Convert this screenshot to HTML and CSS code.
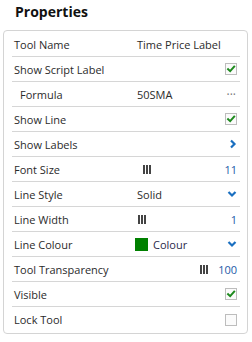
FILE: index.html
```html
<!DOCTYPE html>
<html lang="en">
<head>
  <meta charset="UTF-8" />
  <meta name="viewport" content="width=device-width, initial-scale=1.0" />
  <title>Properties</title>
  <link rel="stylesheet" href="styles.css">
</head>
<body>

  <h1 class="title">Properties</h1>

  <div class="panel">
    <div class="row">
      <span class="label">Tool Name</span>
      <span class="value">Time Price Label</span>
    </div>
    <div class="row">
      <span class="label">Show Script Label</span>
      <span class="value"></span>
      <span class="check on"><svg viewBox="0 0 12 12"><path d="M2.5 6.2 L5 8.6 L9.8 3.2" /></svg></span>
    </div>
    <div class="row">
      <span class="label sub">Formula</span>
      <span class="value">50SMA</span>
      <span class="dots">···</span>
    </div>
    <div class="row">
      <span class="label">Show Line</span>
      <span class="value"></span>
      <span class="check on"><svg viewBox="0 0 12 12"><path d="M2.5 6.2 L5 8.6 L9.8 3.2" /></svg></span>
    </div>
    <div class="row">
      <span class="label">Show Labels</span>
      <span class="value"></span>
      <svg class="chev" viewBox="0 0 8 10"><path d="M2 1.5 L5.5 5 L2 8.5" /></svg>
    </div>
    <div class="row">
      <span class="label">Font Size</span>
      <span class="value"><span class="bars shift"><i></i><i></i><i></i></span></span>
      <span class="num">11</span>
    </div>
    <div class="row">
      <span class="label">Line Style</span>
      <span class="value">Solid</span>
      <svg class="chev down" viewBox="0 0 10 8"><path d="M1.5 2 L5 5.5 L8.5 2" /></svg>
    </div>
    <div class="row">
      <span class="label">Line Width</span>
      <span class="value"><span class="bars"><i></i><i></i><i></i></span></span>
      <span class="num">1</span>
    </div>
    <div class="row">
      <span class="label">Line Colour</span>
      <span class="value colour"><span class="swatch"></span>Colour</span>
      <svg class="chev down" viewBox="0 0 10 8"><path d="M1.5 2 L5 5.5 L8.5 2" /></svg>
    </div>
    <div class="row">
      <span class="label">Tool Transparency</span>
      <span class="value right"><span class="bars"><i></i><i></i><i></i></span></span>
      <span class="num">100</span>
    </div>
    <div class="row">
      <span class="label">Visible</span>
      <span class="value"></span>
      <span class="check on"><svg viewBox="0 0 12 12"><path d="M2.5 6.2 L5 8.6 L9.8 3.2" /></svg></span>
    </div>
    <div class="row last">
      <span class="label">Lock Tool</span>
      <span class="value"></span>
      <span class="check"></span>
    </div>
  </div>

</body>
</html>
```

FILE: styles.css
```css
body {
  font-family: "Open Sans", Arial, sans-serif;
  background-color: #fff;
  color: #2b2b2b;
  margin: 0;
  padding: 0 5px 0 3px;
}
.title {
  font-size: 14px;
  font-weight: 700;
  color: #111;
  margin: 0;
  padding: 2px 0 0 12px;
  height: 28px;
  line-height: 20px;
}
.panel {
  border: 1px solid #d4d4d4;
  border-radius: 4px;
  padding: 0 7px 1px 8px;
  width: 228px;
}
.row {
  box-sizing: border-box;
  display: flex;
  align-items: center;
  height: 25px;
  border-bottom: 1px solid #d6d6d6;
  font-size: 11px;
  padding: 0 3px 0 2px;
}
.row:first-child {
  height: 26px;
  padding-top: 1px;
}
.row.last {
  border-bottom: none;
}
.label {
  width: 123px;
  flex-shrink: 0;
}
.label.sub {
  padding-left: 6px;
  width: 117px;
}
.value {
  flex: 1;
  display: flex;
  align-items: center;
}
.value.right {
  justify-content: flex-end;
  padding-right: 10px;
}
.bars {
  display: flex;
  gap: 1px;
  height: 9px;
  margin-left: 1px;
}
.bars.shift {
  margin-left: 6px;
}
.bars i {
  width: 2px;
  height: 9px;
  background: #444;
}
.num {
  color: #1c5aa8;
}
.check {
  width: 10px;
  height: 10px;
  border: 1px solid #bdbdbd;
  background: #fbfbfb;
  display: flex;
}
.check svg {
  width: 10px;
  height: 10px;
}
.check path {
  fill: none;
  stroke: #1d8a1d;
  stroke-width: 2.4;
  stroke-linecap: square;
}
.dots {
  color: #777;
  font-size: 12px;
  margin-right: 1px;
}
.chev {
  width: 8px;
  height: 10px;
}
.chev.down {
  width: 10px;
  height: 8px;
}
.chev path {
  fill: none;
  stroke: #1a6fc0;
  stroke-width: 2.2;
}
.swatch {
  width: 13px;
  height: 13px;
  background: #008000;
  margin: 0 5px 0 -2px;
}
.colour {
  color: #2a2a4a;
}
```
